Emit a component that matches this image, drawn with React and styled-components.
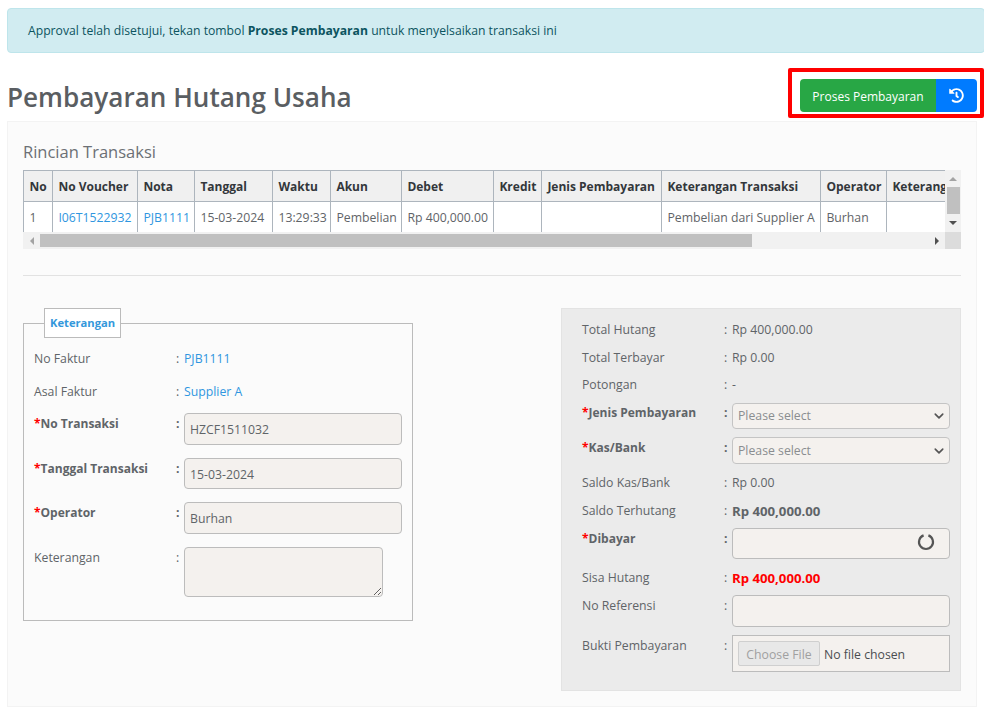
import React from 'react';
import styled, { createGlobalStyle } from 'styled-components';
import { FaHistory } from 'react-icons/fa';

const GlobalStyle = createGlobalStyle`
  html, body { margin: 0; padding: 0; background: #fff; overflow: hidden; }
  body {
    font-family: "Open Sans", "Liberation Sans", sans-serif;
    font-size: 12.25px;
    line-height: 20px;
    color: #5f6468;
  }
`;

const Page = styled.div`
  width: 984px;
  height: 715px;
  padding: 8px 7px 0;
  box-sizing: border-box;
  overflow: hidden;
`;

const Alert = styled.div`
  height: 45px;
  box-sizing: border-box;
  margin-right: -8px;
  padding: 12px 20px;
  background: #d1ecf1;
  border: 1px solid #bee5eb;
  border-radius: 4px;
  color: #0c5460;
  font-size: 12.2px;
  b { font-weight: 700; }
`;

const Header = styled.div`
  display: flex;
  justify-content: space-between;
  align-items: flex-start;
  height: 68px;
  padding-top: 26px;
  box-sizing: border-box;
`;

const Title = styled.h1`
  margin: 0;
  font-size: 26.1px;
  line-height: 36px;
  font-weight: 600;
  color: #5a5e62;
`;

const ButtonGroup = styled.div`
  position: relative;
  display: flex;
  height: 33px;
`;

const Highlight = styled.span`
  position: absolute;
  top: -11px;
  bottom: -6px;
  left: -12px;
  right: -7px;
  border: 4px solid #ff0000;
  border-radius: 2px;
  pointer-events: none;
`;

const ActionButton = styled.button`
  display: flex;
  align-items: center;
  justify-content: center;
  width: ${p => p.$width}px;
  padding: ${p => p.$textPad || 0}px 0 0;
  border: 0;
  color: #fff;
  font-family: inherit;
  font-size: 12px;
  background: ${p => p.$color};
  border-radius: ${p => p.$radius};
`;

const Card = styled.div`
  height: 586px;
  width: 970px;
  box-sizing: border-box;
  padding: 18px 15px 0;
  background: #fbfbfb;
  border: 1px solid #f3f3f3;
`;

const SectionTitle = styled.h2`
  margin: 0 0 6px;
  font-size: 16.5px;
  line-height: 24px;
  font-weight: 400;
  color: #6c7075;
`;

const TableFrame = styled.div`
  display: grid;
  grid-template-columns: 922px 16px;
  grid-template-rows: 62px 17px;
`;

const TableViewport = styled.div`
  overflow: hidden;
`;

const Table = styled.table`
  table-layout: fixed;
  width: 1010px;
  border-collapse: collapse;
  border: 1px solid #adb5bd;
  margin: 0;
`;

const HeadCell = styled.th`
  height: 31px;
  padding: 1px 5.4px 0;
  box-sizing: border-box;
  border: 1px solid #adb5bd;
  background: #f0f0f0;
  color: #33373b;
  font-size: 12px;
  font-weight: 700;
  text-align: left;
  white-space: nowrap;
  overflow: hidden;
`;

const BodyCell = styled.td`
  height: 31px;
  padding: 1px 5.4px 0;
  box-sizing: border-box;
  border: 1px solid #adb5bd;
  background: #fff;
  white-space: nowrap;
  overflow: hidden;
`;

const Link = styled.span`
  color: #2f96e0;
`;

const ScrollTrack = styled.div`
  display: flex;
  flex-direction: ${p => (p.$vertical ? 'column' : 'row')};
  align-items: center;
  background: #f1f1f1;
`;

const ScrollThumb = styled.div`
  background: #c0c0c0;
  ${p => (p.$vertical ? 'width: 13px; height: 27px;' : 'height: 13px; width: 712px; margin-right: auto;')}
`;

const ScrollArrow = styled.div`
  flex: none;
  width: ${p => (p.$horizontal ? '17px' : '16px')};
  height: 17px;
  display: flex;
  align-items: center;
  justify-content: center;
  &::before {
    content: '';
    border-style: solid;
    border-color: transparent;
    ${p => p.$dir === 'up' && `border-width: 0 4px 4px; border-bottom-color: ${p.$muted ? '#a3a3a3' : '#505050'};`}
    ${p => p.$dir === 'down' && `border-width: 4px 4px 0; border-top-color: #505050;`}
    ${p => p.$dir === 'left' && `border-width: 4px 4px 4px 0; border-right-color: ${p.$muted ? '#a3a3a3' : '#505050'};`}
    ${p => p.$dir === 'right' && `border-width: 4px 0 4px 4px; border-left-color: #505050;`}
  }
`;

const ScrollCorner = styled.div`
  background: #dcdcdc;
`;

const Divider = styled.hr`
  margin: 26px 0 32px;
  border: 0;
  border-top: 1px solid #e2e2e2;
`;

const Columns = styled.div`
  display: flex;
  justify-content: space-between;
  align-items: flex-start;
`;

const Fieldset = styled.fieldset`
  width: 390px;
  height: 313px;
  margin: 0;
  padding: 0 10px;
  box-sizing: border-box;
  border: 1px solid #bbb;
  display: flex;
  flex-direction: column;
`;

const Legend = styled.legend`
  margin-left: 10px;
  padding: 0 5px;
  height: 30px;
  width: 77px;
  box-sizing: border-box;
  border: 1px solid #bbb;
  background: #fff;
  color: #3498db;
  font-weight: 700;
  font-size: 11.2px;
  line-height: 28px;
  white-space: nowrap;
`;

const FormStack = styled.div`
  display: grid;
  row-gap: ${p => p.$gap}px;
  padding-top: ${p => p.$top}px;
`;

const Row = styled.div`
  display: grid;
  grid-template-columns: 142px 8px ${p => p.$width || 218}px;
  align-items: start;
  margin-top: ${p => p.$shift || 0}px;
`;

const Label = styled.div`
  padding-top: ${p => (p.$flush ? 0 : 2)}px;
  line-height: ${p => (p.$flush ? 20 : 18)}px;
  font-size: ${p => (p.$required ? '12px' : '12.25px')};
  font-weight: ${p => (p.$required ? 700 : 400)};
  white-space: nowrap;
`;

const Star = styled.span`
  color: #ff0000;
`;

const Colon = styled.span`
  padding-top: ${p => (p.$flush ? 0 : 2)}px;
  line-height: ${p => (p.$flush ? 20 : 18)}px;
  font-weight: ${p => (p.$required ? 700 : 400)};
`;

const TextValue = styled.div`
  padding-top: 2px;
  line-height: 18px;
  white-space: nowrap;
`;

const StrongValue = styled(TextValue)`
  font-weight: 700;
  font-size: 13.2px;
  color: ${p => p.$color || 'inherit'};
`;

const Input = styled.div`
  position: relative;
  height: ${p => p.$height}px;
  box-sizing: border-box;
  padding: ${p => p.$height / 2 - 10}px 5px 0;
  background: #f4f1ee;
  border: 1px solid #bcbcbc;
  border-radius: 4px;
`;

const TextArea = styled.textarea`
  display: block;
  width: 199px;
  height: 50px;
  box-sizing: border-box;
  padding: 4px 5px;
  background: #f4f1ee;
  border: 1px solid #bcbcbc;
  border-radius: 4px;
  font: inherit;
  outline: none;
`;

const Panel = styled.div`
  width: 400px;
  height: 383px;
  box-sizing: border-box;
  padding: 0 10px 0 20px;
  background: #ebebeb;
  border: 1px solid #e3e3e3;
`;

const Select = styled.div`
  display: flex;
  align-items: center;
  justify-content: space-between;
  height: ${p => p.$height}px;
  box-sizing: border-box;
  padding: 0 5px;
  background: #f4f1ee;
  border: 1px solid #c4c4c4;
  border-radius: 4px;
  color: #8a8d90;
`;

const Spinner = styled.svg`
  position: absolute;
  top: 3px;
  right: 13px;
`;

const FileBox = styled.div`
  display: flex;
  align-items: center;
  gap: 4px;
  height: 37px;
  box-sizing: border-box;
  padding: 0 5px;
  background: #f4f1ee;
  border: 1px solid #bcbcbc;
`;

const FileButton = styled.span`
  height: 25px;
  width: 82px;
  box-sizing: border-box;
  text-align: center;
  line-height: 25px;
  background: #e8e8e8;
  border: 1px solid #cfcfcf;
  border-radius: 2px;
  color: #a0a0a0;
`;

const FileName = styled.span`
  padding-top: 2px;
  color: #4a4d50;
`;

const columns = [
  ['No', 29], ['No Voucher', 85], ['Nota', 57], ['Tanggal', 78], ['Waktu', 58], ['Akun', 71],
  ['Debet', 92], ['Kredit', 48], ['Jenis Pembayaran', 120], ['Keterangan Transaksi', 159],
  ['Operator', 66], ['Keterangan', 147],
];

function Chevron() {
  return (
    <svg width="10" height="10" viewBox="0 0 16 16" fill="none" stroke="#555" strokeWidth="2.6" strokeLinecap="round" strokeLinejoin="round">
      <path d="M2 5l6 6 6-6" />
    </svg>
  );
}

function Field({ label, required, width, shift, flush, children }) {
  return (
    <Row $width={width} $shift={shift}>
      <Label $required={required} $flush={flush}>
        {required && <Star>*</Star>}
        {label}
      </Label>
      <Colon $required={required} $flush={flush}>:</Colon>
      <div>{children}</div>
    </Row>
  );
}

export default function App() {
  return (
    <Page>
      <GlobalStyle />
      <Alert>
        Approval telah disetujui, tekan tombol <b>Proses Pembayaran</b> untuk menyelsaikan transaksi ini
      </Alert>

      <Header>
        <Title>Pembayaran Hutang Usaha</Title>
        <ButtonGroup>
          <ActionButton $width={136} $color="#28a745" $radius="4px 0 0 4px" $textPad={2}>Proses Pembayaran</ActionButton>
          <ActionButton $width={41} $color="#007bff" $radius="0 4px 4px 0">
            <FaHistory size={15} />
          </ActionButton>
          <Highlight />
        </ButtonGroup>
      </Header>

      <Card>
        <SectionTitle>Rincian Transaksi</SectionTitle>
        <TableFrame>
          <TableViewport>
            <Table>
              <colgroup>
                {columns.map(([name, w]) => <col key={name} width={w} />)}
              </colgroup>
              <thead>
                <tr>
                  {columns.map(([name]) => <HeadCell key={name}>{name}</HeadCell>)}
                </tr>
              </thead>
              <tbody>
                <tr>
                  <BodyCell>1</BodyCell>
                  <BodyCell><Link>I06T1522932</Link></BodyCell>
                  <BodyCell><Link>PJB1111</Link></BodyCell>
                  <BodyCell>15-03-2024</BodyCell>
                  <BodyCell>13:29:33</BodyCell>
                  <BodyCell>Pembelian</BodyCell>
                  <BodyCell>Rp 400,000.00</BodyCell>
                  <BodyCell />
                  <BodyCell />
                  <BodyCell>Pembelian dari Supplier A</BodyCell>
                  <BodyCell>Burhan</BodyCell>
                  <BodyCell />
                </tr>
              </tbody>
            </Table>
          </TableViewport>
          <ScrollTrack $vertical>
            <ScrollArrow $dir="up" $muted />
            <ScrollThumb $vertical />
            <ScrollArrow $dir="down" />
          </ScrollTrack>
          <ScrollTrack>
            <ScrollArrow $horizontal $dir="left" $muted />
            <ScrollThumb />
            <ScrollArrow $horizontal $dir="right" />
          </ScrollTrack>
          <ScrollCorner />
        </TableFrame>

        <Divider />

        <Columns>
          <Fieldset>
            <Legend>Keterangan</Legend>
            <FormStack $gap={13} $top={10}>
              <Field label="No Faktur"><TextValue><Link>PJB1111</Link></TextValue></Field>
              <Field label="Asal Faktur"><TextValue><Link>Supplier A</Link></TextValue></Field>
              <Field label="No Transaksi" required shift={-1}><Input $height={32}>HZCF1511032</Input></Field>
              <Field label="Tanggal Transaksi" required><Input $height={31}>15-03-2024</Input></Field>
              <Field label="Operator" required><Input $height={32}>Burhan</Input></Field>
              <Field label="Keterangan" width={199}><TextArea readOnly /></Field>
            </FormStack>
          </Fieldset>

          <Panel>
            <FormStack $gap={8} $top={10}>
              <Field label="Total Hutang"><TextValue>Rp 400,000.00</TextValue></Field>
              <Field label="Total Terbayar"><TextValue>Rp 0.00</TextValue></Field>
              <Field label="Potongan" shift={-1}><TextValue>-</TextValue></Field>
              <Field label="Jenis Pembayaran" required shift={1} flush>
                <Select $height={26}>Please select<Chevron /></Select>
              </Field>
              <Field label="Kas/Bank" required>
                <Select $height={27}>Please select<Chevron /></Select>
              </Field>
              <Field label="Saldo Kas/Bank"><TextValue>Rp 0.00</TextValue></Field>
              <Field label="Saldo Terhutang"><StrongValue>Rp 400,000.00</StrongValue></Field>
              <Field label="Dibayar" required>
                <Input $height={31}>
                  <Spinner width="20" height="20" viewBox="0 0 20 20" fill="none">
                    <path d="M7.6 3.4A7 7 0 1 0 12.4 3.4" stroke="#555" strokeWidth="2.2" />
                  </Spinner>
                </Input>
              </Field>
              <Field label="Sisa Hutang"><StrongValue $color="#ff0000">Rp 400,000.00</StrongValue></Field>
              <Field label="No Referensi"><Input $height={32} /></Field>
              <Field label="Bukti Pembayaran">
                <FileBox>
                  <FileButton>Choose File</FileButton>
                  <FileName>No file chosen</FileName>
                </FileBox>
              </Field>
            </FormStack>
          </Panel>
        </Columns>
      </Card>
    </Page>
  );
}
